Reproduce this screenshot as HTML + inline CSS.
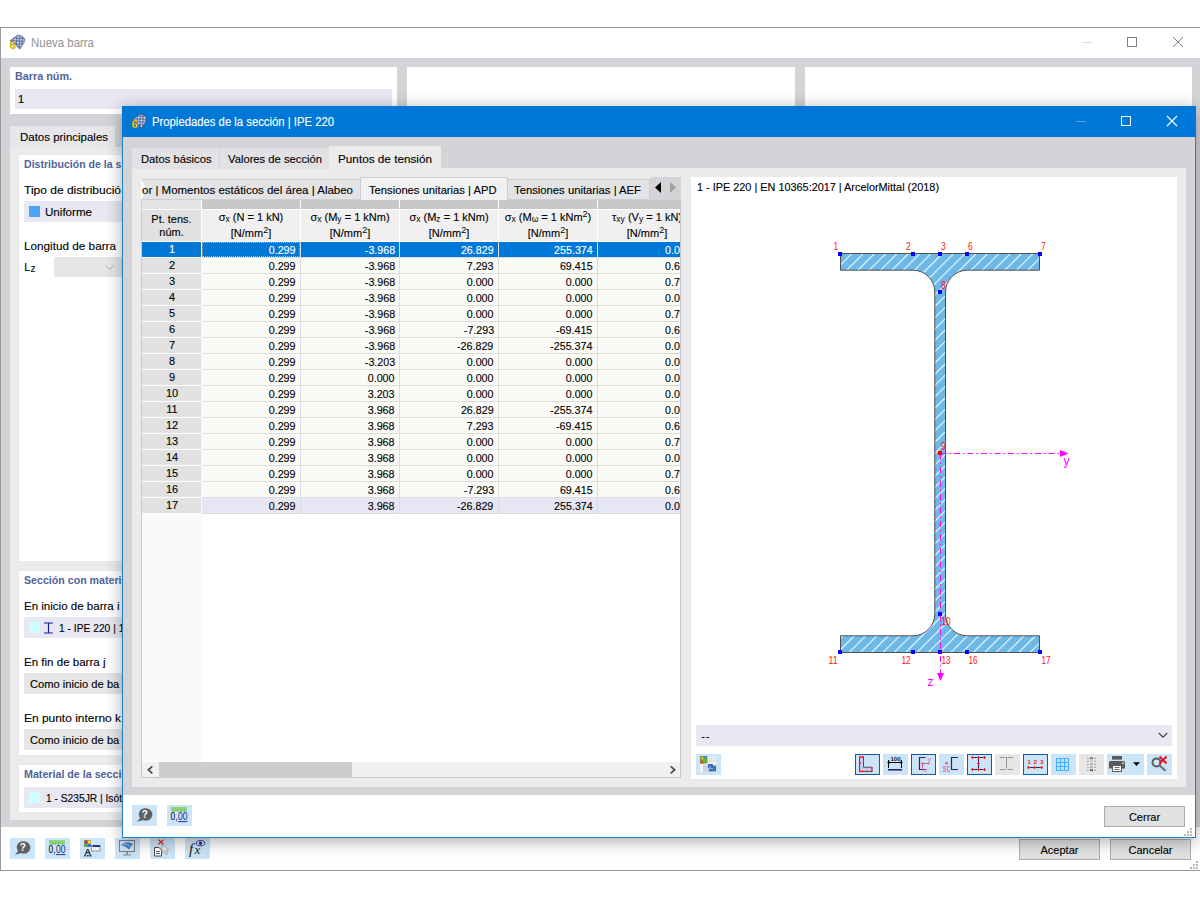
<!DOCTYPE html>
<html lang="es"><head><meta charset="utf-8"><title>Propiedades de la sección | IPE 220</title>
<style>
html,body{margin:0;padding:0;background:#fff;}
body{width:1200px;height:900px;position:relative;overflow:hidden;font-family:'Liberation Sans', sans-serif;font-size:12px;color:#000;}
div,span.t,svg{position:absolute;box-sizing:border-box;}
span.t{white-space:pre;line-height:16px;height:16px;-webkit-text-stroke:0.12px currentColor;}
sub,sup{line-height:0;}
sub{font-size:8.5px;vertical-align:-1.2px;-webkit-text-stroke:0;}sup{font-size:9px;vertical-align:4px;-webkit-text-stroke:0;}

</style></head><body>
<div style="left:0px;top:27px;width:1px;height:844px;background:#8a8290;"></div>
<div style="left:0px;top:27px;width:1200px;height:844px;background:#fff;border:1px solid #9a9a9e;border-right:none;"></div>
<div style="left:1px;top:58px;width:1199px;height:769px;background:#d3d3d8;"></div>
<div style="left:10px;top:67px;width:387px;height:47px;background:#fff;"></div>
<div style="left:407px;top:67px;width:388px;height:47px;background:#fff;"></div>
<div style="left:805px;top:67px;width:387px;height:47px;background:#fff;"></div>
<div style="left:15px;top:89px;width:377px;height:20px;background:#e8e8f2;"></div>
<div style="left:10px;top:126px;width:105px;height:22px;background:#e7e7e9;"></div>
<div style="left:10px;top:147px;width:400px;height:673px;background:#ebebeb;"></div>
<div style="left:19px;top:155px;width:380px;height:406px;background:#fff;"></div>
<div style="left:19px;top:571px;width:380px;height:184px;background:#fff;"></div>
<div style="left:19px;top:765px;width:380px;height:47px;background:#fff;"></div>
<div style="left:24px;top:201px;width:200px;height:21px;background:#e8e8f2;"></div>
<div style="left:29px;top:206px;width:11px;height:11px;background:#4da3f5;"></div>
<div style="left:54px;top:257px;width:100px;height:20px;background:#e6e6e6;"></div>
<svg style="left:104.5px;top:264px" width="10" height="8" viewBox="0 0 10 8"><path d="M0.8 1.5 L4.7 5.4 L8.6 1.5" fill="none" stroke="#b0b0b0" stroke-width="1"/></svg>
<div style="left:24px;top:617px;width:200px;height:21px;background:#e8e8f2;"></div>
<div style="left:29px;top:622px;width:11px;height:11px;background:#ccffff;"></div>
<svg style="left:43px;top:622px" width="11" height="12" viewBox="0 0 11 12"><path d="M1 1 H10 M1 11 H10 M5.5 1 V11" fill="none" stroke="#1a1a9a" stroke-width="1.2"/></svg>
<div style="left:24px;top:673px;width:200px;height:21px;background:#e6e6e6;"></div>
<div style="left:24px;top:729px;width:200px;height:21px;background:#e6e6e6;"></div>
<div style="left:24px;top:787px;width:200px;height:21px;background:#e8e8f2;"></div>
<div style="left:29px;top:792px;width:11px;height:11px;background:#ccffff;"></div>
<div style="left:10px;top:838px;width:25px;height:21px;background:#cce4f7;"></div>
<svg style="left:10px;top:838px" width="25" height="21" viewBox="10 838 25 21"><path d="M14.8 854.8 L19.0 850.3 A6 6 0 1 1 21.6 852.9 Z" fill="#5f5f5f"/><circle cx="22.8" cy="847.3" r="6" fill="#5f5f5f"/><text x="22.8" y="850.6999999999999" font-family="Liberation Sans, sans-serif" font-size="10" font-weight="700" fill="#fff" text-anchor="middle">?</text></svg>
<div style="left:45px;top:838px;width:25px;height:21px;background:#cce4f7;"></div>
<svg style="left:45px;top:838px" width="25" height="21" viewBox="45 838 25 21"><rect x="49" y="840" width="16" height="4.5" fill="#8fd47c"/><rect x="52.2" y="842.5" width="0.8" height="2" fill="#5ea850"/><rect x="55.4" y="842.5" width="0.8" height="2" fill="#5ea850"/><rect x="58.6" y="842.5" width="0.8" height="2" fill="#5ea850"/><rect x="61.8" y="842.5" width="0.8" height="2" fill="#5ea850"/><text x="48.6" y="853.4" font-family="Liberation Sans, sans-serif" font-size="10.5" fill="#000" textLength="7" lengthAdjust="spacingAndGlyphs">0,</text><text x="56" y="853.4" font-family="Liberation Sans, sans-serif" font-size="10.5" fill="#1a237e" textLength="9.5" lengthAdjust="spacingAndGlyphs">00</text><rect x="56" y="854.2" width="9.5" height="0.9" fill="#1a237e"/></svg>
<div style="left:80px;top:838px;width:25px;height:21px;background:#cce4f7;"></div>
<svg style="left:80px;top:838px" width="25" height="21" viewBox="80 838 25 21"><rect x="84" y="840" width="7" height="7" fill="#8a8a8a"/><rect x="84.7" y="840.7" width="2.8" height="2.8" fill="#ff2020"/><rect x="87.9" y="840.7" width="2.8" height="2.8" fill="#ffee00"/><rect x="84.7" y="843.9" width="2.8" height="2.8" fill="#20d020"/><rect x="87.9" y="843.9" width="2.8" height="2.8" fill="#4060ff"/><text x="84.6" y="854.8" font-family="Liberation Sans, sans-serif" font-size="9" font-weight="700" fill="#111" textLength="6.4" lengthAdjust="spacingAndGlyphs">A</text><rect x="84" y="855.2" width="1.6" height="1.2" fill="#111"/><rect x="86.8" y="855.2" width="1.8" height="1.2" fill="#111"/><rect x="89.4" y="855.2" width="2" height="1.2" fill="#111"/><rect x="91.5" y="845.5" width="8.5" height="5.5" fill="#f4f4f4" stroke="#808080" stroke-width="0.8"/><rect x="92.5" y="845.2" width="7.5" height="1.8" fill="#1a2a8a"/></svg>
<div style="left:115px;top:838px;width:25px;height:21px;background:#cce4f7;"></div>
<svg style="left:115px;top:838px" width="25" height="21" viewBox="115 838 25 21"><rect x="119.5" y="840.5" width="15" height="11" fill="#cfe0f2" stroke="#7d7d7d" stroke-width="1"/><path d="M121 845 C124 841.5 129 841.5 133 844 L129 849.5 C127 847 124 846 121 845 Z" fill="#3f7fd0"/><path d="M123 844 C126 843.5 129 845 130.5 847" fill="none" stroke="#b9d4f5" stroke-width="0.8"/><rect x="126.3" y="851.5" width="1.6" height="3" fill="#7d7d7d"/><rect x="123" y="854.4" width="8" height="1" fill="#7d7d7d"/></svg>
<div style="left:150px;top:838px;width:25px;height:21px;background:#cce4f7;"></div>
<svg style="left:150px;top:838px" width="25" height="21" viewBox="150 838 25 21"><path d="M158.5 839.8 L163.5 844.2 M163.5 839.8 L158.5 844.2" stroke="#e8202a" stroke-width="1.2" fill="none"/><path d="M154.5 847.5 H159 L161.5 850 V856 H154.5 Z" fill="#fff" stroke="#4a4a4a" stroke-width="1"/><path d="M156 851.5 H160 M156 853.5 H160" stroke="#4a4a4a" stroke-width="0.9"/><path d="M162 844 L162 853 L164.2 850.8 L166 854.5 L167.6 853.8 L165.8 850.2 L168.6 850 Z" fill="#f2f2f2" stroke="#9a9a9a" stroke-width="0.8"/></svg>
<div style="left:185px;top:838px;width:25px;height:21px;background:#cce4f7;"></div>
<svg style="left:185px;top:838px" width="25" height="21" viewBox="185 838 25 21"><text x="189" y="854" font-family="Liberation Serif, serif" font-style="italic" font-size="15" fill="#222">f</text><text x="194.5" y="854" font-family="Liberation Serif, serif" font-style="italic" font-size="13" fill="#222">x</text><ellipse cx="200.5" cy="843.2" rx="4.2" ry="2.6" fill="#e8eefc" stroke="#2a2a90" stroke-width="1"/><circle cx="200.5" cy="843.2" r="1.7" fill="#2a2a90"/></svg>
<svg style="left:9px;top:34px" width="17" height="17" viewBox="9 34 17 17"><defs><pattern id="chk1" patternUnits="userSpaceOnUse" width="4" height="4" patternTransform="translate(9 34) rotate(-42)"><rect width="4" height="4" fill="#566a98"/><rect width="2" height="2" fill="#c3d2ec"/><rect x="2" y="2" width="2" height="2" fill="#a4b8de"/></pattern></defs><g transform="translate(9 34)"><path d="M1.2 6.6 L8.4 1.2 Q12.6 0.8 15.2 4 Q16 6.4 15.2 8.2 L10.8 15.2 L6 10 Z" fill="url(#chk1)" stroke="#3d4f7a" stroke-width="0.6"/><text x="3.8" y="15.4" font-family="Liberation Sans, sans-serif" font-size="11.5" font-weight="700" fill="#ffd61a" stroke="#8a6d00" stroke-width="0.3" text-anchor="middle">6</text></g></svg>
<div style="left:1019px;top:839px;width:81px;height:21px;background:#e1e1e1;border:1px solid #adadad;"></div>
<div style="left:1110px;top:839px;width:81px;height:21px;background:#e1e1e1;border:1px solid #adadad;"></div>
<svg style="left:1080px;top:30px" width="120" height="26" viewBox="0 0 120 26"><path d="M2.5 12.5 H12.5" stroke="#dcdcdc" stroke-width="1" fill="none"/><rect x="47.5" y="7.5" width="9" height="9" stroke="#7c7c7c" stroke-width="1" fill="none"/><path d="M93 7 L103 17 M103 7 L93 17" stroke="#7c7c7c" stroke-width="1" fill="none"/></svg>
<svg style="left:1189px;top:860px" width="9" height="9" viewBox="0 0 9 9"><rect x="7" y="7" width="2" height="2" fill="#b8b8b8"/><rect x="4" y="7" width="2" height="2" fill="#b8b8b8"/><rect x="1" y="7" width="2" height="2" fill="#b8b8b8"/><rect x="7" y="4" width="2" height="2" fill="#b8b8b8"/><rect x="4" y="4" width="2" height="2" fill="#b8b8b8"/><rect x="7" y="1" width="2" height="2" fill="#b8b8b8"/></svg>
<span class="t" style="left:31px;top:35.0px;font-size:12px;color:#999;transform:scaleX(0.9539);transform-origin:left center;">Nueva barra</span><span class="t" style="left:15px;top:68.0px;font-size:11px;color:#50639a;font-weight:700;-webkit-text-stroke:0;transform:scaleX(0.9814);transform-origin:left center;">Barra núm.</span><span class="t" style="left:18px;top:91.0px;font-size:11px;color:#000;">1</span><span class="t" style="left:19.5px;top:129.0px;font-size:11px;color:#000;transform:scaleX(1.043);transform-origin:left center;">Datos principales</span><span class="t" style="left:24px;top:156.0px;font-size:11px;color:#50639a;font-weight:700;-webkit-text-stroke:0;transform:scaleX(0.9609);transform-origin:left center;">Distribución de la s</span><span class="t" style="left:24px;top:182.0px;font-size:11px;color:#000;transform:scaleX(1.0916);transform-origin:left center;">Tipo de distribució</span><span class="t" style="left:45px;top:204.0px;font-size:11px;color:#000;transform:scaleX(1.0532);transform-origin:left center;">Uniforme</span><span class="t" style="left:24px;top:238.0px;font-size:11px;color:#000;transform:scaleX(1.0669);transform-origin:left center;">Longitud de barra</span><span class="t" style="left:24.3px;top:259.0px;font-size:11px;color:#000;">L<sub style="font-size:10px;vertical-align:-1px">z</sub></span><span class="t" style="left:24px;top:572.0px;font-size:11px;color:#50639a;font-weight:700;-webkit-text-stroke:0;transform:scaleX(0.9665);transform-origin:left center;">Sección con materi</span><span class="t" style="left:24px;top:598.0px;font-size:11px;color:#000;transform:scaleX(1.0482);transform-origin:left center;">En inicio de barra i</span><span class="t" style="left:59px;top:620.0px;font-size:11px;color:#000;transform:scaleX(0.9319);transform-origin:left center;">1 - IPE 220 | 1</span><span class="t" style="left:24px;top:654.0px;font-size:11px;color:#000;transform:scaleX(1.0495);transform-origin:left center;">En fin de barra j</span><span class="t" style="left:29.5px;top:676.0px;font-size:11px;color:#000;transform:scaleX(1.0141);transform-origin:left center;">Como inicio de ba</span><span class="t" style="left:24px;top:710.0px;font-size:11px;color:#000;transform:scaleX(1.0863);transform-origin:left center;">En punto interno k</span><span class="t" style="left:29.5px;top:732.0px;font-size:11px;color:#000;transform:scaleX(1.0141);transform-origin:left center;">Como inicio de ba</span><span class="t" style="left:24px;top:766.0px;font-size:11px;color:#50639a;font-weight:700;-webkit-text-stroke:0;transform:scaleX(0.9713);transform-origin:left center;">Material de la secci</span><span class="t" style="left:46px;top:790.0px;font-size:11px;color:#000;transform:scaleX(0.9298);transform-origin:left center;">1 - S235JR | Isót</span><span class="t" style="left:1040.54px;top:842.0px;font-size:11px;color:#000;">Aceptar</span><span class="t" style="left:1128.48px;top:842.0px;font-size:11px;color:#000;">Cancelar</span>
<div style="left:122px;top:106px;width:1074px;height:732px;background:#d3d3d8;border:1px solid #1883d7;box-shadow:0 3px 16px rgba(0,0,0,0.34);"></div>
<div style="left:122px;top:106px;width:1074px;height:31px;background:#0078d7;"></div>
<div style="left:123px;top:795px;width:1072px;height:42px;background:#fff;"></div>
<div style="left:132px;top:168px;width:1054px;height:619px;background:#ebebeb;"></div>
<div style="left:132px;top:148px;width:197px;height:21px;background:#e2e2e4;"></div>
<div style="left:219px;top:148px;width:1px;height:21px;background:#d4d4d8;"></div>
<div style="left:329px;top:146px;width:112px;height:24px;background:#ebebeb;"></div>
<div style="left:141px;top:179px;width:540px;height:21px;background:#d9d9dc;"></div>
<div style="left:141px;top:179px;width:220px;height:21px;background:#e3e3e5;border-top:1px solid #cdcdd6;border-bottom:1px solid #cdcdd6;"></div>
<div style="left:507px;top:179px;width:143px;height:21px;background:#e3e3e5;border:1px solid #cdcdd6;border-left:none;"></div>
<div style="left:360px;top:177px;width:148px;height:23px;background:#f1f1f1;border:1px solid #cdcdd6;border-bottom:none;"></div>
<svg style="left:141px;top:180px" width="5" height="19" viewBox="0 0 5 19"><path d="M0 0 L0.6 0 L4 6.2 L0.8 9.5 L3.6 13.5 L0.6 19 L0 19 Z" fill="#fbfbfb"/></svg>
<div style="left:650px;top:177px;width:31px;height:23px;background:#d3d3d8;"></div>
<svg style="left:650px;top:179px" width="31" height="21" viewBox="0 0 31 21"><path d="M11 3 L5 8.5 L11 14 Z" fill="#000"/><path d="M20 3 L26 8.5 L20 14 Z" fill="#a0a0a0"/></svg>
<div style="left:141px;top:200px;width:540px;height:578px;background:#fff;border-left:1px solid #c9c9d2;"></div>
<div style="left:142px;top:200px;width:60px;height:561px;background:#f8f8f8;"></div>
<div style="left:142px;top:200px;width:59px;height:9px;background:#e4e4e4;"></div>
<div style="left:142px;top:210px;width:59px;height:31px;background:#e1e1e1;"></div>
<div style="left:202px;top:200px;width:479px;height:9px;background:#c8c8c8;"></div>
<div style="left:202px;top:210px;width:479px;height:31px;background:#f0f0f0;"></div>
<div style="left:201px;top:200px;width:1px;height:42px;background:#fff;"></div>
<div style="left:300px;top:200px;width:1px;height:42px;background:#fff;"></div>
<div style="left:399px;top:200px;width:1px;height:42px;background:#fff;"></div>
<div style="left:498px;top:200px;width:1px;height:42px;background:#fff;"></div>
<div style="left:597px;top:200px;width:1px;height:42px;background:#fff;"></div>
<div style="left:142px;top:241px;width:539px;height:1px;background:#fff;"></div>
<div style="left:142px;top:242px;width:59px;height:272px;background:#fff;"></div>
<div style="left:202px;top:242px;width:479px;height:272px;background:#dcdcdc;"></div>
<div style="left:142px;top:242px;width:59px;height:15px;background:#0078d7;"></div>
<div style="left:202px;top:242px;width:98px;height:15px;background:#0078d7;"></div>
<div style="left:301px;top:242px;width:98px;height:15px;background:#0078d7;"></div>
<div style="left:400px;top:242px;width:98px;height:15px;background:#0078d7;"></div>
<div style="left:499px;top:242px;width:98px;height:15px;background:#0078d7;"></div>
<div style="left:598px;top:242px;width:83px;height:15px;background:#0078d7;"></div>
<div style="left:202px;top:242px;width:98px;height:15px;background:transparent;border:1px dotted #f2a45a;"></div>
<div style="left:142px;top:258px;width:59px;height:15px;background:#e1e1e1;"></div>
<div style="left:202px;top:258px;width:98px;height:15px;background:#fafaf6;"></div>
<div style="left:301px;top:258px;width:98px;height:15px;background:#fafaf6;"></div>
<div style="left:400px;top:258px;width:98px;height:15px;background:#fafaf6;"></div>
<div style="left:499px;top:258px;width:98px;height:15px;background:#fafaf6;"></div>
<div style="left:598px;top:258px;width:83px;height:15px;background:#fafaf6;"></div>
<div style="left:142px;top:274px;width:59px;height:15px;background:#e1e1e1;"></div>
<div style="left:202px;top:274px;width:98px;height:15px;background:#fafaf6;"></div>
<div style="left:301px;top:274px;width:98px;height:15px;background:#fafaf6;"></div>
<div style="left:400px;top:274px;width:98px;height:15px;background:#fafaf6;"></div>
<div style="left:499px;top:274px;width:98px;height:15px;background:#fafaf6;"></div>
<div style="left:598px;top:274px;width:83px;height:15px;background:#fafaf6;"></div>
<div style="left:142px;top:290px;width:59px;height:15px;background:#e1e1e1;"></div>
<div style="left:202px;top:290px;width:98px;height:15px;background:#fafaf6;"></div>
<div style="left:301px;top:290px;width:98px;height:15px;background:#fafaf6;"></div>
<div style="left:400px;top:290px;width:98px;height:15px;background:#fafaf6;"></div>
<div style="left:499px;top:290px;width:98px;height:15px;background:#fafaf6;"></div>
<div style="left:598px;top:290px;width:83px;height:15px;background:#fafaf6;"></div>
<div style="left:142px;top:306px;width:59px;height:15px;background:#e1e1e1;"></div>
<div style="left:202px;top:306px;width:98px;height:15px;background:#fafaf6;"></div>
<div style="left:301px;top:306px;width:98px;height:15px;background:#fafaf6;"></div>
<div style="left:400px;top:306px;width:98px;height:15px;background:#fafaf6;"></div>
<div style="left:499px;top:306px;width:98px;height:15px;background:#fafaf6;"></div>
<div style="left:598px;top:306px;width:83px;height:15px;background:#fafaf6;"></div>
<div style="left:142px;top:322px;width:59px;height:15px;background:#e1e1e1;"></div>
<div style="left:202px;top:322px;width:98px;height:15px;background:#fafaf6;"></div>
<div style="left:301px;top:322px;width:98px;height:15px;background:#fafaf6;"></div>
<div style="left:400px;top:322px;width:98px;height:15px;background:#fafaf6;"></div>
<div style="left:499px;top:322px;width:98px;height:15px;background:#fafaf6;"></div>
<div style="left:598px;top:322px;width:83px;height:15px;background:#fafaf6;"></div>
<div style="left:142px;top:338px;width:59px;height:15px;background:#e1e1e1;"></div>
<div style="left:202px;top:338px;width:98px;height:15px;background:#fafaf6;"></div>
<div style="left:301px;top:338px;width:98px;height:15px;background:#fafaf6;"></div>
<div style="left:400px;top:338px;width:98px;height:15px;background:#fafaf6;"></div>
<div style="left:499px;top:338px;width:98px;height:15px;background:#fafaf6;"></div>
<div style="left:598px;top:338px;width:83px;height:15px;background:#fafaf6;"></div>
<div style="left:142px;top:354px;width:59px;height:15px;background:#e1e1e1;"></div>
<div style="left:202px;top:354px;width:98px;height:15px;background:#fafaf6;"></div>
<div style="left:301px;top:354px;width:98px;height:15px;background:#fafaf6;"></div>
<div style="left:400px;top:354px;width:98px;height:15px;background:#fafaf6;"></div>
<div style="left:499px;top:354px;width:98px;height:15px;background:#fafaf6;"></div>
<div style="left:598px;top:354px;width:83px;height:15px;background:#fafaf6;"></div>
<div style="left:142px;top:370px;width:59px;height:15px;background:#e1e1e1;"></div>
<div style="left:202px;top:370px;width:98px;height:15px;background:#fafaf6;"></div>
<div style="left:301px;top:370px;width:98px;height:15px;background:#fafaf6;"></div>
<div style="left:400px;top:370px;width:98px;height:15px;background:#fafaf6;"></div>
<div style="left:499px;top:370px;width:98px;height:15px;background:#fafaf6;"></div>
<div style="left:598px;top:370px;width:83px;height:15px;background:#fafaf6;"></div>
<div style="left:142px;top:386px;width:59px;height:15px;background:#e1e1e1;"></div>
<div style="left:202px;top:386px;width:98px;height:15px;background:#fafaf6;"></div>
<div style="left:301px;top:386px;width:98px;height:15px;background:#fafaf6;"></div>
<div style="left:400px;top:386px;width:98px;height:15px;background:#fafaf6;"></div>
<div style="left:499px;top:386px;width:98px;height:15px;background:#fafaf6;"></div>
<div style="left:598px;top:386px;width:83px;height:15px;background:#fafaf6;"></div>
<div style="left:142px;top:402px;width:59px;height:15px;background:#e1e1e1;"></div>
<div style="left:202px;top:402px;width:98px;height:15px;background:#fafaf6;"></div>
<div style="left:301px;top:402px;width:98px;height:15px;background:#fafaf6;"></div>
<div style="left:400px;top:402px;width:98px;height:15px;background:#fafaf6;"></div>
<div style="left:499px;top:402px;width:98px;height:15px;background:#fafaf6;"></div>
<div style="left:598px;top:402px;width:83px;height:15px;background:#fafaf6;"></div>
<div style="left:142px;top:418px;width:59px;height:15px;background:#e1e1e1;"></div>
<div style="left:202px;top:418px;width:98px;height:15px;background:#fafaf6;"></div>
<div style="left:301px;top:418px;width:98px;height:15px;background:#fafaf6;"></div>
<div style="left:400px;top:418px;width:98px;height:15px;background:#fafaf6;"></div>
<div style="left:499px;top:418px;width:98px;height:15px;background:#fafaf6;"></div>
<div style="left:598px;top:418px;width:83px;height:15px;background:#fafaf6;"></div>
<div style="left:142px;top:434px;width:59px;height:15px;background:#e1e1e1;"></div>
<div style="left:202px;top:434px;width:98px;height:15px;background:#fafaf6;"></div>
<div style="left:301px;top:434px;width:98px;height:15px;background:#fafaf6;"></div>
<div style="left:400px;top:434px;width:98px;height:15px;background:#fafaf6;"></div>
<div style="left:499px;top:434px;width:98px;height:15px;background:#fafaf6;"></div>
<div style="left:598px;top:434px;width:83px;height:15px;background:#fafaf6;"></div>
<div style="left:142px;top:450px;width:59px;height:15px;background:#e1e1e1;"></div>
<div style="left:202px;top:450px;width:98px;height:15px;background:#fafaf6;"></div>
<div style="left:301px;top:450px;width:98px;height:15px;background:#fafaf6;"></div>
<div style="left:400px;top:450px;width:98px;height:15px;background:#fafaf6;"></div>
<div style="left:499px;top:450px;width:98px;height:15px;background:#fafaf6;"></div>
<div style="left:598px;top:450px;width:83px;height:15px;background:#fafaf6;"></div>
<div style="left:142px;top:466px;width:59px;height:15px;background:#e1e1e1;"></div>
<div style="left:202px;top:466px;width:98px;height:15px;background:#fafaf6;"></div>
<div style="left:301px;top:466px;width:98px;height:15px;background:#fafaf6;"></div>
<div style="left:400px;top:466px;width:98px;height:15px;background:#fafaf6;"></div>
<div style="left:499px;top:466px;width:98px;height:15px;background:#fafaf6;"></div>
<div style="left:598px;top:466px;width:83px;height:15px;background:#fafaf6;"></div>
<div style="left:142px;top:482px;width:59px;height:15px;background:#e1e1e1;"></div>
<div style="left:202px;top:482px;width:98px;height:15px;background:#fafaf6;"></div>
<div style="left:301px;top:482px;width:98px;height:15px;background:#fafaf6;"></div>
<div style="left:400px;top:482px;width:98px;height:15px;background:#fafaf6;"></div>
<div style="left:499px;top:482px;width:98px;height:15px;background:#fafaf6;"></div>
<div style="left:598px;top:482px;width:83px;height:15px;background:#fafaf6;"></div>
<div style="left:142px;top:498px;width:59px;height:15px;background:#e1e1e1;"></div>
<div style="left:202px;top:498px;width:98px;height:15px;background:#e6e6f5;"></div>
<div style="left:301px;top:498px;width:98px;height:15px;background:#e6e6f5;"></div>
<div style="left:400px;top:498px;width:98px;height:15px;background:#e6e6f5;"></div>
<div style="left:499px;top:498px;width:98px;height:15px;background:#e6e6f5;"></div>
<div style="left:598px;top:498px;width:83px;height:15px;background:#e6e6f5;"></div>
<div style="left:142px;top:761px;width:539px;height:1px;background:#fff;"></div>
<div style="left:142px;top:762px;width:539px;height:15px;background:#f0f0f0;"></div>
<div style="left:159px;top:762px;width:193px;height:15px;background:#cdcdcd;"></div>
<div style="left:141px;top:777px;width:540px;height:1px;background:#c9c9d2;"></div>
<svg style="left:142px;top:761.5px" width="539" height="16" viewBox="0 0 539 16"><path d="M10.3 4.3 L6.4 7.8 L10.3 11.3" fill="none" stroke="#4a4a4a" stroke-width="1.8"/><path d="M528.7 4.3 L532.6 7.8 L528.7 11.3" fill="none" stroke="#4a4a4a" stroke-width="1.8"/></svg>
<div style="left:132px;top:805px;width:25px;height:21px;background:#cce4f7;"></div>
<div style="left:167px;top:805px;width:25px;height:21px;background:#cce4f7;"></div>
<svg style="left:132px;top:805px" width="25" height="21" viewBox="132 805 25 21"><path d="M136.8 821.8 L141.0 817.3 A6 6 0 1 1 143.60000000000002 819.9 Z" fill="#5f5f5f"/><circle cx="144.8" cy="814.3" r="6" fill="#5f5f5f"/><text x="144.8" y="817.6999999999999" font-family="Liberation Sans, sans-serif" font-size="10" font-weight="700" fill="#fff" text-anchor="middle">?</text></svg>
<svg style="left:167px;top:805px" width="25" height="21" viewBox="167 805 25 21"><rect x="171" y="807" width="16" height="4.5" fill="#8fd47c"/><rect x="174.2" y="809.5" width="0.8" height="2" fill="#5ea850"/><rect x="177.4" y="809.5" width="0.8" height="2" fill="#5ea850"/><rect x="180.6" y="809.5" width="0.8" height="2" fill="#5ea850"/><rect x="183.8" y="809.5" width="0.8" height="2" fill="#5ea850"/><text x="170.6" y="820.4" font-family="Liberation Sans, sans-serif" font-size="10.5" fill="#000" textLength="7" lengthAdjust="spacingAndGlyphs">0,</text><text x="178" y="820.4" font-family="Liberation Sans, sans-serif" font-size="10.5" fill="#1a237e" textLength="9.5" lengthAdjust="spacingAndGlyphs">00</text><rect x="178" y="821.2" width="9.5" height="0.9" fill="#1a237e"/></svg>
<svg style="left:131px;top:113px" width="17" height="17" viewBox="131 113 17 17"><defs><pattern id="chk2" patternUnits="userSpaceOnUse" width="4" height="4" patternTransform="translate(131 113) rotate(-42)"><rect width="4" height="4" fill="#566a98"/><rect width="2" height="2" fill="#c3d2ec"/><rect x="2" y="2" width="2" height="2" fill="#a4b8de"/></pattern></defs><g transform="translate(131 113)"><path d="M1.2 6.6 L8.4 1.2 Q12.6 0.8 15.2 4 Q16 6.4 15.2 8.2 L10.8 15.2 L6 10 Z" fill="url(#chk2)" stroke="#3d4f7a" stroke-width="0.6"/><text x="3.8" y="15.4" font-family="Liberation Sans, sans-serif" font-size="11.5" font-weight="700" fill="#ffd61a" stroke="#8a6d00" stroke-width="0.3" text-anchor="middle">6</text></g></svg>
<div style="left:1104px;top:806px;width:81px;height:21px;background:#e1e1e1;border:1px solid #adadad;"></div>
<svg style="left:1070px;top:107px" width="120" height="29" viewBox="0 0 120 29"><path d="M6 14.5 H16" stroke="#4b9fe4" stroke-width="1" fill="none"/><rect x="51.5" y="9.5" width="9" height="9" stroke="#fff" stroke-width="1" fill="none"/><path d="M97 9 L107 19 M107 9 L97 19" stroke="#fff" stroke-width="1.1" fill="none"/></svg>
<svg style="left:1183px;top:827px" width="9" height="9" viewBox="0 0 9 9"><rect x="7" y="7" width="2" height="2" fill="#b8b8b8"/><rect x="4" y="7" width="2" height="2" fill="#b8b8b8"/><rect x="1" y="7" width="2" height="2" fill="#b8b8b8"/><rect x="7" y="4" width="2" height="2" fill="#b8b8b8"/><rect x="4" y="4" width="2" height="2" fill="#b8b8b8"/><rect x="7" y="1" width="2" height="2" fill="#b8b8b8"/></svg>
<span class="t" style="left:151.8px;top:114.0px;font-size:12px;color:#fff;transform:scaleX(0.9418);transform-origin:left center;">Propiedades de la sección | IPE 220</span><span class="t" style="left:141px;top:151.0px;font-size:11px;color:#000;transform:scaleX(1.0204);transform-origin:left center;">Datos básicos</span><span class="t" style="left:228px;top:151.0px;font-size:11px;color:#000;transform:scaleX(1.0204);transform-origin:left center;">Valores de sección</span><span class="t" style="left:338px;top:151.0px;font-size:11px;color:#000;transform:scaleX(1.0672);transform-origin:left center;">Puntos de tensión</span><span class="t" style="left:142px;top:182.0px;font-size:11px;color:#000;transform:scaleX(1.0446);transform-origin:left center;">or | Momentos estáticos del área | Alabeo</span><span class="t" style="left:369px;top:182.0px;font-size:11px;color:#000;transform:scaleX(1.0187);transform-origin:left center;">Tensiones unitarias | APD</span><span class="t" style="left:514px;top:182.0px;font-size:11px;color:#000;transform:scaleX(1.0248);transform-origin:left center;">Tensiones unitarias | AEF</span><span class="t" style="left:151.32px;top:211.0px;font-size:11px;color:#000;">Pt. tens.</span><span class="t" style="left:159.27px;top:224.0px;font-size:11px;color:#000;">núm.</span><span class="t" style="left:218.73px;top:209.0px;font-size:11px;color:#000;">σ<sub>x</sub> (N = 1 kN)</span><span class="t" style="left:230.77px;top:225.0px;font-size:11px;color:#000;">[N/mm<sup>2</sup>]</span><span class="t" style="left:310.41px;top:209.0px;font-size:11px;color:#000;">σ<sub>x</sub> (M<sub>y</sub> = 1 kNm)</span><span class="t" style="left:329.77px;top:225.0px;font-size:11px;color:#000;">[N/mm<sup>2</sup>]</span><span class="t" style="left:409.41px;top:209.0px;font-size:11px;color:#000;">σ<sub>x</sub> (M<sub>z</sub> = 1 kNm)</span><span class="t" style="left:428.77px;top:225.0px;font-size:11px;color:#000;">[N/mm<sup>2</sup>]</span><span class="t" style="left:504.7px;top:209.0px;font-size:11px;color:#000;">σ<sub>x</sub> (M<sub>ω</sub> = 1 kNm<sup>2</sup>)</span><span class="t" style="left:527.77px;top:225.0px;font-size:11px;color:#000;">[N/mm<sup>2</sup>]</span><span class="t" style="left:612.0px;top:209.0px;font-size:11px;color:#000;">τ<sub>xy</sub> (V<sub>y</sub> = 1 kN)</span><span class="t" style="left:626.77px;top:225.0px;font-size:11px;color:#000;">[N/mm<sup>2</sup>]</span><span class="t" style="left:168.94px;top:240.9px;font-size:11px;color:#fff;">1</span><span class="t" style="left:268.17px;top:241.6px;font-size:11px;color:#fff;transform:scaleX(0.9734);transform-origin:right center;">0.299</span><span class="t" style="left:363.5px;top:241.6px;font-size:11px;color:#fff;transform:scaleX(0.9734);transform-origin:right center;">-3.968</span><span class="t" style="left:460.04px;top:241.6px;font-size:11px;color:#fff;transform:scaleX(0.9734);transform-origin:right center;">26.829</span><span class="t" style="left:552.93px;top:241.6px;font-size:11px;color:#fff;transform:scaleX(0.9734);transform-origin:right center;">255.374</span><span class="t" style="left:665.3px;top:241.6px;font-size:11px;color:#fff;transform:scaleX(0.9734);transform-origin:left center;">0.0</span><span class="t" style="left:168.94px;top:256.90000000000003px;font-size:11px;color:#000;">2</span><span class="t" style="left:268.17px;top:257.6px;font-size:11px;color:#000;transform:scaleX(0.9734);transform-origin:right center;">0.299</span><span class="t" style="left:363.5px;top:257.6px;font-size:11px;color:#000;transform:scaleX(0.9734);transform-origin:right center;">-3.968</span><span class="t" style="left:466.17px;top:257.6px;font-size:11px;color:#000;transform:scaleX(0.9734);transform-origin:right center;">7.293</span><span class="t" style="left:559.04px;top:257.6px;font-size:11px;color:#000;transform:scaleX(0.9734);transform-origin:right center;">69.415</span><span class="t" style="left:665.3px;top:257.6px;font-size:11px;color:#000;transform:scaleX(0.9734);transform-origin:left center;">0.6</span><span class="t" style="left:168.94px;top:272.90000000000003px;font-size:11px;color:#000;">3</span><span class="t" style="left:268.17px;top:273.6px;font-size:11px;color:#000;transform:scaleX(0.9734);transform-origin:right center;">0.299</span><span class="t" style="left:363.5px;top:273.6px;font-size:11px;color:#000;transform:scaleX(0.9734);transform-origin:right center;">-3.968</span><span class="t" style="left:466.17px;top:273.6px;font-size:11px;color:#000;transform:scaleX(0.9734);transform-origin:right center;">0.000</span><span class="t" style="left:565.17px;top:273.6px;font-size:11px;color:#000;transform:scaleX(0.9734);transform-origin:right center;">0.000</span><span class="t" style="left:665.3px;top:273.6px;font-size:11px;color:#000;transform:scaleX(0.9734);transform-origin:left center;">0.7</span><span class="t" style="left:168.94px;top:288.90000000000003px;font-size:11px;color:#000;">4</span><span class="t" style="left:268.17px;top:289.6px;font-size:11px;color:#000;transform:scaleX(0.9734);transform-origin:right center;">0.299</span><span class="t" style="left:363.5px;top:289.6px;font-size:11px;color:#000;transform:scaleX(0.9734);transform-origin:right center;">-3.968</span><span class="t" style="left:466.17px;top:289.6px;font-size:11px;color:#000;transform:scaleX(0.9734);transform-origin:right center;">0.000</span><span class="t" style="left:565.17px;top:289.6px;font-size:11px;color:#000;transform:scaleX(0.9734);transform-origin:right center;">0.000</span><span class="t" style="left:665.3px;top:289.6px;font-size:11px;color:#000;transform:scaleX(0.9734);transform-origin:left center;">0.0</span><span class="t" style="left:168.94px;top:304.90000000000003px;font-size:11px;color:#000;">5</span><span class="t" style="left:268.17px;top:305.6px;font-size:11px;color:#000;transform:scaleX(0.9734);transform-origin:right center;">0.299</span><span class="t" style="left:363.5px;top:305.6px;font-size:11px;color:#000;transform:scaleX(0.9734);transform-origin:right center;">-3.968</span><span class="t" style="left:466.17px;top:305.6px;font-size:11px;color:#000;transform:scaleX(0.9734);transform-origin:right center;">0.000</span><span class="t" style="left:565.17px;top:305.6px;font-size:11px;color:#000;transform:scaleX(0.9734);transform-origin:right center;">0.000</span><span class="t" style="left:665.3px;top:305.6px;font-size:11px;color:#000;transform:scaleX(0.9734);transform-origin:left center;">0.7</span><span class="t" style="left:168.94px;top:320.90000000000003px;font-size:11px;color:#000;">6</span><span class="t" style="left:268.17px;top:321.6px;font-size:11px;color:#000;transform:scaleX(0.9734);transform-origin:right center;">0.299</span><span class="t" style="left:363.5px;top:321.6px;font-size:11px;color:#000;transform:scaleX(0.9734);transform-origin:right center;">-3.968</span><span class="t" style="left:462.5px;top:321.6px;font-size:11px;color:#000;transform:scaleX(0.9734);transform-origin:right center;">-7.293</span><span class="t" style="left:555.39px;top:321.6px;font-size:11px;color:#000;transform:scaleX(0.9734);transform-origin:right center;">-69.415</span><span class="t" style="left:665.3px;top:321.6px;font-size:11px;color:#000;transform:scaleX(0.9734);transform-origin:left center;">0.6</span><span class="t" style="left:168.94px;top:336.90000000000003px;font-size:11px;color:#000;">7</span><span class="t" style="left:268.17px;top:337.6px;font-size:11px;color:#000;transform:scaleX(0.9734);transform-origin:right center;">0.299</span><span class="t" style="left:363.5px;top:337.6px;font-size:11px;color:#000;transform:scaleX(0.9734);transform-origin:right center;">-3.968</span><span class="t" style="left:456.39px;top:337.6px;font-size:11px;color:#000;transform:scaleX(0.9734);transform-origin:right center;">-26.829</span><span class="t" style="left:549.26px;top:337.6px;font-size:11px;color:#000;transform:scaleX(0.9734);transform-origin:right center;">-255.374</span><span class="t" style="left:665.3px;top:337.6px;font-size:11px;color:#000;transform:scaleX(0.9734);transform-origin:left center;">0.0</span><span class="t" style="left:168.94px;top:352.90000000000003px;font-size:11px;color:#000;">8</span><span class="t" style="left:268.17px;top:353.6px;font-size:11px;color:#000;transform:scaleX(0.9734);transform-origin:right center;">0.299</span><span class="t" style="left:363.5px;top:353.6px;font-size:11px;color:#000;transform:scaleX(0.9734);transform-origin:right center;">-3.203</span><span class="t" style="left:466.17px;top:353.6px;font-size:11px;color:#000;transform:scaleX(0.9734);transform-origin:right center;">0.000</span><span class="t" style="left:565.17px;top:353.6px;font-size:11px;color:#000;transform:scaleX(0.9734);transform-origin:right center;">0.000</span><span class="t" style="left:665.3px;top:353.6px;font-size:11px;color:#000;transform:scaleX(0.9734);transform-origin:left center;">0.0</span><span class="t" style="left:168.94px;top:368.90000000000003px;font-size:11px;color:#000;">9</span><span class="t" style="left:268.17px;top:369.6px;font-size:11px;color:#000;transform:scaleX(0.9734);transform-origin:right center;">0.299</span><span class="t" style="left:367.17px;top:369.6px;font-size:11px;color:#000;transform:scaleX(0.9734);transform-origin:right center;">0.000</span><span class="t" style="left:466.17px;top:369.6px;font-size:11px;color:#000;transform:scaleX(0.9734);transform-origin:right center;">0.000</span><span class="t" style="left:565.17px;top:369.6px;font-size:11px;color:#000;transform:scaleX(0.9734);transform-origin:right center;">0.000</span><span class="t" style="left:665.3px;top:369.6px;font-size:11px;color:#000;transform:scaleX(0.9734);transform-origin:left center;">0.0</span><span class="t" style="left:165.88px;top:384.90000000000003px;font-size:11px;color:#000;">10</span><span class="t" style="left:268.17px;top:385.6px;font-size:11px;color:#000;transform:scaleX(0.9734);transform-origin:right center;">0.299</span><span class="t" style="left:367.17px;top:385.6px;font-size:11px;color:#000;transform:scaleX(0.9734);transform-origin:right center;">3.203</span><span class="t" style="left:466.17px;top:385.6px;font-size:11px;color:#000;transform:scaleX(0.9734);transform-origin:right center;">0.000</span><span class="t" style="left:565.17px;top:385.6px;font-size:11px;color:#000;transform:scaleX(0.9734);transform-origin:right center;">0.000</span><span class="t" style="left:665.3px;top:385.6px;font-size:11px;color:#000;transform:scaleX(0.9734);transform-origin:left center;">0.0</span><span class="t" style="left:166.29px;top:400.90000000000003px;font-size:11px;color:#000;">11</span><span class="t" style="left:268.17px;top:401.6px;font-size:11px;color:#000;transform:scaleX(0.9734);transform-origin:right center;">0.299</span><span class="t" style="left:367.17px;top:401.6px;font-size:11px;color:#000;transform:scaleX(0.9734);transform-origin:right center;">3.968</span><span class="t" style="left:460.04px;top:401.6px;font-size:11px;color:#000;transform:scaleX(0.9734);transform-origin:right center;">26.829</span><span class="t" style="left:549.26px;top:401.6px;font-size:11px;color:#000;transform:scaleX(0.9734);transform-origin:right center;">-255.374</span><span class="t" style="left:665.3px;top:401.6px;font-size:11px;color:#000;transform:scaleX(0.9734);transform-origin:left center;">0.0</span><span class="t" style="left:165.88px;top:416.90000000000003px;font-size:11px;color:#000;">12</span><span class="t" style="left:268.17px;top:417.6px;font-size:11px;color:#000;transform:scaleX(0.9734);transform-origin:right center;">0.299</span><span class="t" style="left:367.17px;top:417.6px;font-size:11px;color:#000;transform:scaleX(0.9734);transform-origin:right center;">3.968</span><span class="t" style="left:466.17px;top:417.6px;font-size:11px;color:#000;transform:scaleX(0.9734);transform-origin:right center;">7.293</span><span class="t" style="left:555.39px;top:417.6px;font-size:11px;color:#000;transform:scaleX(0.9734);transform-origin:right center;">-69.415</span><span class="t" style="left:665.3px;top:417.6px;font-size:11px;color:#000;transform:scaleX(0.9734);transform-origin:left center;">0.6</span><span class="t" style="left:165.88px;top:432.90000000000003px;font-size:11px;color:#000;">13</span><span class="t" style="left:268.17px;top:433.6px;font-size:11px;color:#000;transform:scaleX(0.9734);transform-origin:right center;">0.299</span><span class="t" style="left:367.17px;top:433.6px;font-size:11px;color:#000;transform:scaleX(0.9734);transform-origin:right center;">3.968</span><span class="t" style="left:466.17px;top:433.6px;font-size:11px;color:#000;transform:scaleX(0.9734);transform-origin:right center;">0.000</span><span class="t" style="left:565.17px;top:433.6px;font-size:11px;color:#000;transform:scaleX(0.9734);transform-origin:right center;">0.000</span><span class="t" style="left:665.3px;top:433.6px;font-size:11px;color:#000;transform:scaleX(0.9734);transform-origin:left center;">0.7</span><span class="t" style="left:165.88px;top:448.90000000000003px;font-size:11px;color:#000;">14</span><span class="t" style="left:268.17px;top:449.6px;font-size:11px;color:#000;transform:scaleX(0.9734);transform-origin:right center;">0.299</span><span class="t" style="left:367.17px;top:449.6px;font-size:11px;color:#000;transform:scaleX(0.9734);transform-origin:right center;">3.968</span><span class="t" style="left:466.17px;top:449.6px;font-size:11px;color:#000;transform:scaleX(0.9734);transform-origin:right center;">0.000</span><span class="t" style="left:565.17px;top:449.6px;font-size:11px;color:#000;transform:scaleX(0.9734);transform-origin:right center;">0.000</span><span class="t" style="left:665.3px;top:449.6px;font-size:11px;color:#000;transform:scaleX(0.9734);transform-origin:left center;">0.0</span><span class="t" style="left:165.88px;top:464.90000000000003px;font-size:11px;color:#000;">15</span><span class="t" style="left:268.17px;top:465.6px;font-size:11px;color:#000;transform:scaleX(0.9734);transform-origin:right center;">0.299</span><span class="t" style="left:367.17px;top:465.6px;font-size:11px;color:#000;transform:scaleX(0.9734);transform-origin:right center;">3.968</span><span class="t" style="left:466.17px;top:465.6px;font-size:11px;color:#000;transform:scaleX(0.9734);transform-origin:right center;">0.000</span><span class="t" style="left:565.17px;top:465.6px;font-size:11px;color:#000;transform:scaleX(0.9734);transform-origin:right center;">0.000</span><span class="t" style="left:665.3px;top:465.6px;font-size:11px;color:#000;transform:scaleX(0.9734);transform-origin:left center;">0.7</span><span class="t" style="left:165.88px;top:480.90000000000003px;font-size:11px;color:#000;">16</span><span class="t" style="left:268.17px;top:481.6px;font-size:11px;color:#000;transform:scaleX(0.9734);transform-origin:right center;">0.299</span><span class="t" style="left:367.17px;top:481.6px;font-size:11px;color:#000;transform:scaleX(0.9734);transform-origin:right center;">3.968</span><span class="t" style="left:462.5px;top:481.6px;font-size:11px;color:#000;transform:scaleX(0.9734);transform-origin:right center;">-7.293</span><span class="t" style="left:559.04px;top:481.6px;font-size:11px;color:#000;transform:scaleX(0.9734);transform-origin:right center;">69.415</span><span class="t" style="left:665.3px;top:481.6px;font-size:11px;color:#000;transform:scaleX(0.9734);transform-origin:left center;">0.6</span><span class="t" style="left:165.88px;top:496.90000000000003px;font-size:11px;color:#000;">17</span><span class="t" style="left:268.17px;top:497.6px;font-size:11px;color:#000;transform:scaleX(0.9734);transform-origin:right center;">0.299</span><span class="t" style="left:367.17px;top:497.6px;font-size:11px;color:#000;transform:scaleX(0.9734);transform-origin:right center;">3.968</span><span class="t" style="left:456.39px;top:497.6px;font-size:11px;color:#000;transform:scaleX(0.9734);transform-origin:right center;">-26.829</span><span class="t" style="left:552.93px;top:497.6px;font-size:11px;color:#000;transform:scaleX(0.9734);transform-origin:right center;">255.374</span><span class="t" style="left:665.3px;top:497.6px;font-size:11px;color:#000;transform:scaleX(0.9734);transform-origin:left center;">0.0</span><span class="t" style="left:1128.91px;top:809.0px;font-size:11px;color:#000;">Cerrar</span>
<div style="left:681px;top:200px;width:20px;height:578px;background:#ebebeb;"></div>
<div style="left:680px;top:200px;width:1px;height:578px;background:#c9c9d2;"></div>
<div style="left:691px;top:177px;width:486px;height:602px;background:#fff;"></div>
<div style="left:696px;top:725px;width:476px;height:21px;background:#e8e8f2;"></div>
<svg style="left:1158px;top:732px" width="10" height="7" viewBox="0 0 10 7"><path d="M0.8 1 L5 5.2 L9.2 1" fill="none" stroke="#404040" stroke-width="1.1"/></svg>
<div style="left:855px;top:754px;width:25px;height:21px;background:#cce4f7;border:1px solid #0f5ba6;"></div>
<svg style="left:855px;top:754px" width="25" height="21" viewBox="855 754 25 21"><path d="M859.5 757 H863.5 V767.2 H872 V771.5 H859.5 Z" fill="#c9c9f6" stroke="#4a4a78" stroke-width="1"/><rect x="859.1" y="756.1" width="1.8" height="1.8" rx="0.4" fill="#ff1a1a"/><rect x="862.1" y="756.1" width="1.8" height="1.8" rx="0.4" fill="#ff1a1a"/><rect x="859.1" y="762.1" width="1.8" height="1.8" rx="0.4" fill="#ff1a1a"/><rect x="859.1" y="770.1" width="1.8" height="1.8" rx="0.4" fill="#ff1a1a"/><rect x="861.6" y="770.4" width="1.8" height="1.8" rx="0.4" fill="#ff1a1a"/><rect x="866.1" y="770.4" width="1.8" height="1.8" rx="0.4" fill="#ff1a1a"/><rect x="870.6" y="770.4" width="1.8" height="1.8" rx="0.4" fill="#ff1a1a"/><rect x="870.9" y="766.9" width="1.8" height="1.8" rx="0.4" fill="#ff1a1a"/></svg>
<div style="left:883px;top:754px;width:25px;height:21px;background:#cce4f7;"></div>
<svg style="left:883px;top:754px" width="25" height="21" viewBox="883 754 25 21"><text x="895.5" y="760.6" font-family="Liberation Sans, sans-serif" font-size="6" font-weight="700" fill="#222" text-anchor="middle">100</text><path d="M888 762.5 H902 M888.5 760 V768 M901.5 760 V768" stroke="#000" stroke-width="1" fill="none"/><path d="M887 762.5 L889.5 761 V764 Z M903 762.5 L900.5 761 V764 Z" fill="#000"/><rect x="888" y="769" width="14" height="1.6" fill="#1f2a6b"/></svg>
<div style="left:911px;top:754px;width:25px;height:21px;background:#cce4f7;border:1px solid #0f5ba6;"></div>
<svg style="left:911px;top:754px" width="25" height="21" viewBox="911 754 25 21"><path d="M925.5 757.5 H919.5 V769.5 H925.5" stroke="#1f2a6b" stroke-width="1.2" fill="none"/><circle cx="922.5" cy="763.5" r="1.2" fill="#e0508c"/><path d="M922.5 763.5 H929 M922.5 763.5 V770" stroke="#e0508c" stroke-width="0.9" fill="none"/><path d="M930 763.5 L928 762.3 V764.7 Z M922.5 771.3 L921.3 769.3 H923.7 Z" fill="#e0508c"/><text x="928" y="761.2" font-family="Liberation Sans, sans-serif" font-size="6" fill="#e0508c">y</text><text x="924.4" y="772" font-family="Liberation Sans, sans-serif" font-size="5.5" fill="#e0508c">z</text></svg>
<div style="left:939px;top:754px;width:25px;height:21px;background:#cce4f7;"></div>
<svg style="left:939px;top:754px" width="25" height="21" viewBox="939 754 25 21"><path d="M958 757.5 H951.5 V769.5 H958" stroke="#1f2a6b" stroke-width="1.2" fill="none"/><circle cx="946.5" cy="763.3" r="1.3" fill="#e0508c"/><text x="946.5" y="772" font-family="Liberation Sans, sans-serif" font-size="10" fill="#e0508c" text-anchor="middle" textLength="7.5" lengthAdjust="spacingAndGlyphs">sc</text></svg>
<div style="left:967px;top:754px;width:25px;height:21px;background:#cce4f7;border:1px solid #0f5ba6;"></div>
<svg style="left:967px;top:754px" width="25" height="21" viewBox="967 754 25 21"><path d="M972.5 757.5 H984.5 M972.5 769.5 H984.5 M978.5 757.5 V769.5" stroke="#1f2a6b" stroke-width="1.1" fill="none"/><path d="M971.0 757.5 H974.0 M972.5 756.0 V759.0" stroke="#ff1a1a" stroke-width="1.1"/><path d="M977.0 757.5 H980.0 M978.5 756.0 V759.0" stroke="#ff1a1a" stroke-width="1.1"/><path d="M983.0 757.5 H986.0 M984.5 756.0 V759.0" stroke="#ff1a1a" stroke-width="1.1"/><path d="M977.0 763.5 H980.0 M978.5 762.0 V765.0" stroke="#ff1a1a" stroke-width="1.1"/><path d="M971.0 769.5 H974.0 M972.5 768.0 V771.0" stroke="#ff1a1a" stroke-width="1.1"/><path d="M977.0 769.5 H980.0 M978.5 768.0 V771.0" stroke="#ff1a1a" stroke-width="1.1"/><path d="M983.0 769.5 H986.0 M984.5 768.0 V771.0" stroke="#ff1a1a" stroke-width="1.1"/></svg>
<div style="left:995px;top:754px;width:25px;height:21px;background:#e6e6e6;"></div>
<svg style="left:995px;top:754px" width="25" height="21" viewBox="995 754 25 21"><path d="M1000 757.5 H1005.5 M1007.5 757.5 H1013 M1000 769.5 H1005.5 M1007.5 769.5 H1013 M1006.5 757 V768.5" stroke="#8c8c8c" stroke-width="0.9" fill="none"/></svg>
<div style="left:1023px;top:754px;width:25px;height:21px;background:#cce4f7;border:1px solid #0f5ba6;"></div>
<svg style="left:1023px;top:754px" width="25" height="21" viewBox="1023 754 25 21"><text x="1035.5" y="763.6" font-family="Liberation Sans, sans-serif" font-size="6" font-weight="700" fill="#ff1a1a" text-anchor="middle" textLength="16" lengthAdjust="spacing">1 2 3</text><path d="M1028.5 767.5 H1042.5" stroke="#1f2a6b" stroke-width="1" fill="none"/><path d="M1027.1 767.5 H1029.9 M1028.5 766.1 V768.9" stroke="#ff1a1a" stroke-width="1.1"/><path d="M1033.1 767.5 H1035.9 M1034.5 766.1 V768.9" stroke="#ff1a1a" stroke-width="1.1"/><path d="M1040.1 767.5 H1042.9 M1041.5 766.1 V768.9" stroke="#ff1a1a" stroke-width="1.1"/></svg>
<div style="left:1051px;top:754px;width:25px;height:21px;background:#cce4f7;"></div>
<svg style="left:1051px;top:754px" width="25" height="21" viewBox="1051 754 25 21"><rect x="1056.5" y="758.5" width="12" height="12" fill="#bfe3fb" stroke="#45b0ff" stroke-width="1"/><path d="M1060.5 758.5 V770.5 M1064.5 758.5 V770.5 M1056.5 762.5 H1068.5 M1056.5 766.5 H1068.5" stroke="#45b0ff" stroke-width="1" fill="none"/></svg>
<div style="left:1079px;top:754px;width:25px;height:21px;background:#e6e6e6;"></div>
<svg style="left:1079px;top:754px" width="25" height="21" viewBox="1079 754 25 21"><rect x="1090" y="757.3" width="3" height="1.8" fill="#707070"/><rect x="1087" y="757.8" width="1.8" height="0.9" fill="#909090"/><rect x="1094.2" y="757.8" width="1.8" height="0.9" fill="#909090"/><rect x="1090" y="760.3" width="3" height="1.8" fill="#c8c8c8"/><rect x="1087" y="760.8" width="1.8" height="0.9" fill="#909090"/><rect x="1094.2" y="760.8" width="1.8" height="0.9" fill="#909090"/><rect x="1090" y="763.3" width="3" height="1.8" fill="#a8a8a8"/><rect x="1087" y="763.8" width="1.8" height="0.9" fill="#909090"/><rect x="1094.2" y="763.8" width="1.8" height="0.9" fill="#909090"/><rect x="1090" y="766.3" width="3" height="1.8" fill="#a8a8a8"/><rect x="1087" y="766.8" width="1.8" height="0.9" fill="#909090"/><rect x="1094.2" y="766.8" width="1.8" height="0.9" fill="#909090"/><rect x="1090" y="769.3" width="3" height="1.8" fill="#555"/><rect x="1087" y="769.8" width="1.8" height="0.9" fill="#909090"/><rect x="1094.2" y="769.8" width="1.8" height="0.9" fill="#909090"/></svg>
<div style="left:1107px;top:754px;width:37px;height:21px;background:#cce4f7;"></div>
<svg style="left:1107px;top:754px" width="37" height="21" viewBox="1107 754 37 21"><rect x="1112" y="756" width="10" height="3.6" fill="#5a5a5a"/><path d="M1110.5 761 H1123.5 Q1125 761 1125 762.5 V768.5 H1109 V762.5 Q1109 761 1110.5 761 Z" fill="#5a5a5a"/><rect x="1112.5" y="765.5" width="9" height="6" fill="#fff" stroke="#5a5a5a" stroke-width="1"/><path d="M1114.5 767.5 H1119.5 M1114.5 769.5 H1119.5" stroke="#5a5a5a" stroke-width="0.9"/><rect x="1122" y="762.5" width="1.8" height="1.2" fill="#fff"/><path d="M1133 762.3 H1140 L1136.5 766 Z" fill="#000"/></svg>
<div style="left:1147px;top:754px;width:25px;height:21px;background:#cce4f7;"></div>
<svg style="left:1147px;top:754px" width="25" height="21" viewBox="1147 754 25 21"><circle cx="1156.5" cy="762.5" r="4" fill="none" stroke="#5a5a5a" stroke-width="1.9"/><path d="M1159.5 765.5 L1165 770.3" stroke="#6a6a6a" stroke-width="2" stroke-linecap="round"/><path d="M1159.5 756.5 L1166.5 763.5 M1166.5 756.5 L1159.5 763.5" stroke="#f01020" stroke-width="2" fill="none"/></svg>
<div style="left:696px;top:754px;width:25px;height:21px;background:#cce4f7;"></div>
<svg style="left:696px;top:754px" width="25" height="21" viewBox="696 754 25 21"><rect x="700" y="756" width="16" height="16" fill="#f4f6f8"/><rect x="700" y="756" width="7.5" height="7.5" fill="#7a9a3a"/><rect x="700" y="760" width="4" height="3.5" fill="#a8743a"/><rect x="703" y="759" width="3.5" height="3" fill="#58b82a"/><rect x="701.5" y="757.5" width="1.8" height="1.8" fill="#f6e21a"/><path d="M703.5 757 H706.5 V759" stroke="#3a8ad8" stroke-width="1" fill="none"/><path d="M709.5 756 V763.5 M711.5 756 V763.5 M713.5 756 V763.5 M707.5 758.5 H716 M707.5 761 H716" stroke="#d2dccc" stroke-width="0.8"/><rect x="703" y="764.5" width="6" height="7.5" fill="#b8c6d8" opacity="0.7"/><path d="M708 764 H713 V765.5 H716 V771.5 H709 V768 H708 Z" fill="#3f6fb4"/><path d="M710 766 V768.5 H713" stroke="#8cb4ea" stroke-width="1" fill="none"/></svg>
<svg style="left:691px;top:177px" width="486" height="548" viewBox="691 177 486 548">
<defs><pattern id="hatch" patternUnits="userSpaceOnUse" width="8" height="8" patternTransform="translate(844.5 271.5) rotate(-45)"><rect width="8" height="8" fill="#6cb9e8"/><rect y="0" width="8" height="1.1" fill="#fff" fill-opacity="0.9"/></pattern></defs>
<path d="M840.5,253.5 H1039.5 V270.2 H967.3 A21.8 21.8 0 0 0 945.5,292.0 V614.0 A21.8 21.8 0 0 0 967.3,635.8 H1039.5 V652.5 H840.5 V635.8 H913.0 A21.8 21.8 0 0 0 934.8,614.0 V292.0 A21.8 21.8 0 0 0 913.0,270.2 H840.5 Z" fill="url(#hatch)" stroke="#505050" stroke-width="1"/>
<path d="M1060 450 L1068.5 453.5 L1060 457 Z" fill="#ff00ff"/>
<path d="M937 673 L940.5 681 L944 673 Z" fill="#ff00ff"/>
<rect x="838" y="252" width="4" height="4" fill="#0000ff"/>
<rect x="911" y="252" width="4" height="4" fill="#0000ff"/>
<rect x="938" y="252" width="4" height="4" fill="#0000ff"/>
<rect x="965" y="252" width="4" height="4" fill="#0000ff"/>
<rect x="1038" y="252" width="4" height="4" fill="#0000ff"/>
<rect x="938" y="290" width="4" height="4" fill="#0000ff"/>
<rect x="938" y="612" width="4" height="4" fill="#0000ff"/>
<rect x="838" y="650" width="4" height="4" fill="#0000ff"/>
<rect x="911" y="650" width="4" height="4" fill="#0000ff"/>
<rect x="938" y="650" width="4" height="4" fill="#0000ff"/>
<rect x="965" y="650" width="4" height="4" fill="#0000ff"/>
<rect x="1038" y="650" width="4" height="4" fill="#0000ff"/>
<path d="M940.5 453.5 H1061" stroke="#ff00ff" stroke-width="1" stroke-dasharray="6 3 1.5 3" fill="none"/>
<path d="M940.5 453.5 V674" stroke="#ff00ff" stroke-width="1" stroke-dasharray="6 3 1.5 3" fill="none"/>
<rect x="938" y="451" width="4" height="4" fill="#ff0000"/>
<text x="833.5" y="249.8" font-family="Liberation Sans, sans-serif" font-size="10" fill="#ff1010" textLength="4.7" lengthAdjust="spacingAndGlyphs">1</text>
<text x="906" y="249.8" font-family="Liberation Sans, sans-serif" font-size="10" fill="#ff1010" textLength="4.7" lengthAdjust="spacingAndGlyphs">2</text>
<text x="941" y="249.8" font-family="Liberation Sans, sans-serif" font-size="10" fill="#ff1010" textLength="4.7" lengthAdjust="spacingAndGlyphs">3</text>
<text x="968" y="249.8" font-family="Liberation Sans, sans-serif" font-size="10" fill="#ff1010" textLength="4.7" lengthAdjust="spacingAndGlyphs">6</text>
<text x="1041" y="249.8" font-family="Liberation Sans, sans-serif" font-size="10" fill="#ff1010" textLength="4.7" lengthAdjust="spacingAndGlyphs">7</text>
<text x="941" y="288.8" font-family="Liberation Sans, sans-serif" font-size="10" fill="#ff1010" textLength="4.7" lengthAdjust="spacingAndGlyphs">8</text>
<text x="941" y="449.8" font-family="Liberation Sans, sans-serif" font-size="10" fill="#ff1010" textLength="4.7" lengthAdjust="spacingAndGlyphs">9</text>
<text x="941.5" y="625.3" font-family="Liberation Sans, sans-serif" font-size="10" fill="#ff1010" textLength="9.2" lengthAdjust="spacingAndGlyphs">10</text>
<text x="828.5" y="664.3" font-family="Liberation Sans, sans-serif" font-size="10" fill="#ff1010" textLength="9.2" lengthAdjust="spacingAndGlyphs">11</text>
<text x="901.5" y="664.3" font-family="Liberation Sans, sans-serif" font-size="10" fill="#ff1010" textLength="9.2" lengthAdjust="spacingAndGlyphs">12</text>
<text x="941.5" y="664.3" font-family="Liberation Sans, sans-serif" font-size="10" fill="#ff1010" textLength="9.2" lengthAdjust="spacingAndGlyphs">13</text>
<text x="968.5" y="664.3" font-family="Liberation Sans, sans-serif" font-size="10" fill="#ff1010" textLength="9.2" lengthAdjust="spacingAndGlyphs">16</text>
<text x="1041.5" y="664.3" font-family="Liberation Sans, sans-serif" font-size="10" fill="#ff1010" textLength="9.2" lengthAdjust="spacingAndGlyphs">17</text>
<text x="1063.5" y="465" font-family="Liberation Sans, sans-serif" font-size="12" fill="#ff00ff">y</text>
<text x="927.5" y="686" font-family="Liberation Sans, sans-serif" font-size="12" fill="#ff00ff">z</text>
</svg>
<span class="t" style="left:696.8px;top:178.6px;font-size:11px;color:#000;transform:scaleX(0.9886);transform-origin:left center;">1 - IPE 220 | EN 10365:2017 | ArcelorMittal (2018)</span><span class="t" style="left:701.3px;top:728.0px;font-size:11px;color:#000;letter-spacing:0.8px;">--</span>
</body></html>
